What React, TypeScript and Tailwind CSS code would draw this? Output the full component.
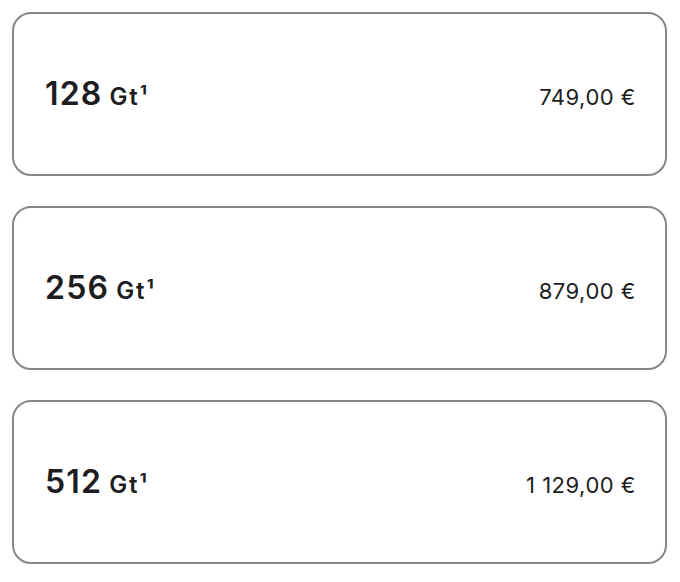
const options = [
  { size: '128', price: '749,00 €' },
  { size: '256', price: '879,00 €' },
  { size: '512', price: '1 129,00 €' },
];

export default function App() {
  return (
    <div
      className="min-h-screen bg-white px-[12px] pt-[12px] pr-[13px]"
      style={{ fontFamily: 'Inter, "Noto Sans", sans-serif' }}
    >
      <div className="flex flex-col gap-[30px]">
        {options.map((o) => (
          <div
            key={o.size}
            className="h-[164px] rounded-[19px] border-2 border-[#86868b] flex items-center pl-[31px] pr-[29px] text-[#1d1d1f]"
          >
            <div className="w-full flex items-baseline justify-between">
              <div className="flex items-baseline font-semibold">
                <span className="text-[32px] tracking-[1.2px]">{o.size}</span>
                <span className="text-[24px] tracking-[1.8px] ml-[7px]">Gt¹</span>
              </div>
              <span className="text-[22px] tracking-[0.5px]">{o.price}</span>
            </div>
          </div>
        ))}
      </div>
    </div>
  );
}
